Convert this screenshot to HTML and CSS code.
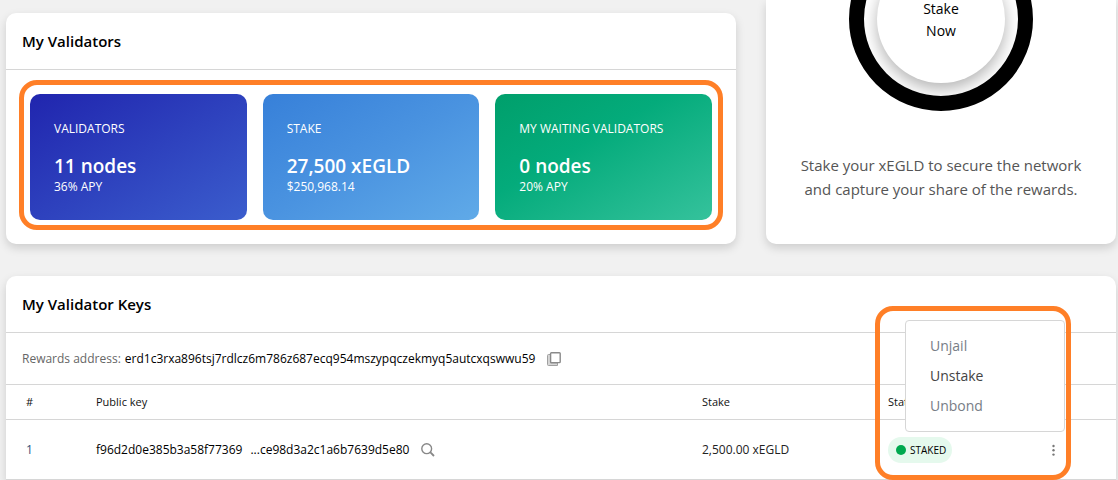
FILE: index.html
```html
<!DOCTYPE html>
<html lang="en">
<head>
<meta charset="utf-8">
<title>Staking dashboard</title>
<link rel="stylesheet" href="styles.css">
</head>
<body>
<main class="page">
  <div class="top">
    <section class="card validators">
      <h2 class="card-title">My Validators</h2>
      <div class="stats">
        <article class="stat stat-indigo">
          <p class="stat-label">VALIDATORS</p>
          <p class="stat-value">11 nodes</p>
          <p class="stat-note">36% APY</p>
        </article>
        <article class="stat stat-blue">
          <p class="stat-label">STAKE</p>
          <p class="stat-value">27,500 xEGLD</p>
          <p class="stat-note">$250,968.14</p>
        </article>
        <article class="stat stat-green">
          <p class="stat-label">MY WAITING VALIDATORS</p>
          <p class="stat-value">0 nodes</p>
          <p class="stat-note">20% APY</p>
        </article>
        <div class="highlight highlight-stats"></div>
      </div>
    </section>
    <section class="card stake">
      <div class="ring"><button class="stake-button" type="button">Stake<br>Now</button></div>
      <p class="stake-text">Stake your xEGLD to secure the network and capture your share of the rewards.</p>
    </section>
  </div>

  <section class="card keys">
    <h2 class="card-title">My Validator Keys</h2>
    <div class="address">
      <span class="address-label">Rewards address:</span>
      <span class="address-value">erd1c3rxa896tsj7rdlcz6m786z687ecq954mszypqczekmyq5autcxqswwu59</span>
      <button class="icon-button copy" type="button" aria-label="Copy address">
        <svg width="14" height="14" viewBox="0 0 14 14" fill="none" stroke="#8a8a8a">
          <path d="M3.500 2.500H1.500Q.5 2.500 .5 3.500V12.500Q.5 13.500 1.500 13.500H10.500V11H3.500Z" fill="#d6d6d6" stroke="#a0a0a0"/>
          <rect x="3.600" y=".8" width="9.600" height="9.800" rx=".8" fill="#fff" stroke-width="1.400"/>
        </svg>
      </button>
    </div>
    <table class="table">
      <colgroup><col class="col-index"><col><col class="col-stake"><col class="col-status"><col class="col-actions"></colgroup>
      <thead>
        <tr><th>#</th><th>Public key</th><th>Stake</th><th>Status</th><th></th></tr>
      </thead>
      <tbody>
        <tr>
          <td class="index">1</td>
          <td>
            <div class="key">
              <span>f96d2d0e385b3a58f77369</span>
              <span class="key-end">...ce98d3a2c1a6b7639d5e80</span>
              <a class="icon-button search" href="#" aria-label="View key">
                <svg width="14" height="14" viewBox="0 0 14 14" fill="none" stroke="#888" stroke-width="1.400">
                  <circle cx="5.700" cy="5.700" r="4.900"/><path d="M9.200 9.200 13 13" stroke-width="1.800"/>
                </svg>
              </a>
            </div>
          </td>
          <td class="amount">2,500.00 xEGLD</td>
          <td><span class="badge">STAKED</span></td>
          <td>
            <div class="actions">
              <button class="icon-button" type="button" aria-label="Key actions">
                <svg width="16" height="16" viewBox="0 0 16 16" fill="#777">
                  <circle cx="8.500" cy="4" r="1.200"/><circle cx="8.500" cy="8.300" r="1.200"/><circle cx="8.500" cy="12.600" r="1.200"/>
                </svg>
              </button>
              <div class="menu">
                <button class="menu-item" type="button" disabled>Unjail</button>
                <button class="menu-item" type="button">Unstake</button>
                <button class="menu-item" type="button" disabled>Unbond</button>
              </div>
            </div>
          </td>
        </tr>
      </tbody>
    </table>
    <div class="highlight highlight-actions"></div>
  </section>
</main>
</body>
</html>
```
FILE: styles.css
```css
* { box-sizing: border-box; }
body {
  margin: 0;
  background: #f1f1f1;
  color: #000;
  font: 13px/20px "Open Sans", "Noto Sans", sans-serif;
}
button { font: inherit; color: inherit; }
.page { padding: 0 2px 0 6px; overflow: hidden; }
.top {
  display: grid;
  grid-template-columns: 1fr 350px;
  gap: 30px;
  margin-bottom: 32px;
}
.card {
  background: #fff;
  border-radius: 10px;
  box-shadow: 0 4px 10px rgba(0, 0, 0, 0.15);
}
.card-title {
  margin: 0;
  padding: 16px;
  border-bottom: 1px solid #d6d6d6;
  font-size: 15px;
  line-height: 24px;
  font-weight: 600;
}
.validators { margin-top: 13px; }
.stats {
  position: relative;
  display: grid;
  grid-template-columns: repeat(3, 1fr);
  gap: 16px;
  margin: 24px;
}
.stat {
  padding: 24px;
  border-radius: 10px;
  color: #fff;
}
.stat p { margin: 0; }
.stat-indigo { background: linear-gradient(150deg, #2025ae, #3b5dcd); }
.stat-blue { background: linear-gradient(150deg, #3780d9, #4a93e0 50%, #60aae8); }
.stat-green { background: linear-gradient(150deg, #009f6b, #04ab7b 40%, #35c29c); }
.stat-label { font-size: 12px; line-height: 22px; }
.stat .stat-value {
  margin-top: 14px;
  font-size: 19px;
  line-height: 24px;
  font-weight: 600;
}
.stat-note { font-size: 12px; line-height: 18px; }
.highlight {
  position: absolute;
  border: 5px solid #ff7f27;
  border-radius: 18px;
  pointer-events: none;
}
.highlight-stats { inset: -14px -11px -10px; }
.stake {
  display: flex;
  flex-direction: column;
  align-items: center;
  border-radius: 0 0 10px 10px;
}
.ring {
  display: grid;
  place-items: center;
  width: 184px;
  height: 184px;
  margin-top: -73px;
  border: 15px solid #000;
  border-radius: 50%;
  overflow: hidden;
}
.stake-button {
  width: 128px;
  height: 128px;
  padding: 2px 0 0;
  border: 0;
  border-radius: 50%;
  background: #fff;
  box-shadow: 0 6px 16px rgba(0, 0, 0, 0.3);
  font-size: 14px;
  line-height: 22px;
}
.stake-text {
  max-width: 310px;
  margin: 42px 0 43px;
  color: #555;
  font-size: 15px;
  line-height: 24px;
  text-align: center;
}
.keys {
  position: relative;
  border-radius: 10px 10px 0 0;
}
.address {
  display: flex;
  align-items: center;
  gap: 4px;
  padding: 16px 16px 15px;
  border-bottom: 1px solid #d6d6d6;
  font-size: 12px;
}
.address-label { color: #666; }
.icon-button {
  display: flex;
  padding: 0;
  border: 0;
  background: none;
}
.copy { margin-left: 8px; }
.table {
  width: 100%;
  border-collapse: separate;
  border-spacing: 0;
  table-layout: fixed;
}
.col-index { width: 70px; }
.col-stake { width: 186px; }
.col-status { width: 157px; }
.col-actions { width: 91px; }
.table th, .table td {
  padding: 0 0 0 20px;
  border-bottom: 1px solid #d6d6d6;
  text-align: left;
}
.table th { height: 35px; font-size: 11px; font-weight: 400; color: #111; }
.table td { height: 60px; font-size: 12px; }
.table .index { color: #32527b; }
.table .amount { color: #222; }
.key { display: flex; align-items: center; }
.key-end { margin-left: 8px; }
.search { margin-left: 12px; }
.badge {
  display: inline-flex;
  align-items: center;
  gap: 4px;
  height: 26px;
  padding: 0 6px 0 8px;
  border-radius: 13px;
  background: #e5f9ed;
  font-size: 10px;
  vertical-align: middle;
}
.badge::before {
  content: "";
  width: 10px;
  height: 10px;
  border-radius: 50%;
  background: #00a94f;
}
.actions { position: relative; width: 16px; }
.menu {
  position: absolute;
  right: -4px;
  bottom: 26px;
  width: 160px;
  padding: 10px 0;
  border: 1px solid #d6d6d6;
  border-radius: 4px;
  background: #fff;
}
.menu-item {
  display: block;
  width: 100%;
  padding: 0 24px;
  border: 0;
  background: none;
  color: #444;
  font-size: 14px;
  line-height: 30px;
  text-align: left;
}
.menu-item:disabled { color: #777d86; }
.highlight-actions { top: 30px; right: 45px; bottom: 0; width: 196px; }
```
